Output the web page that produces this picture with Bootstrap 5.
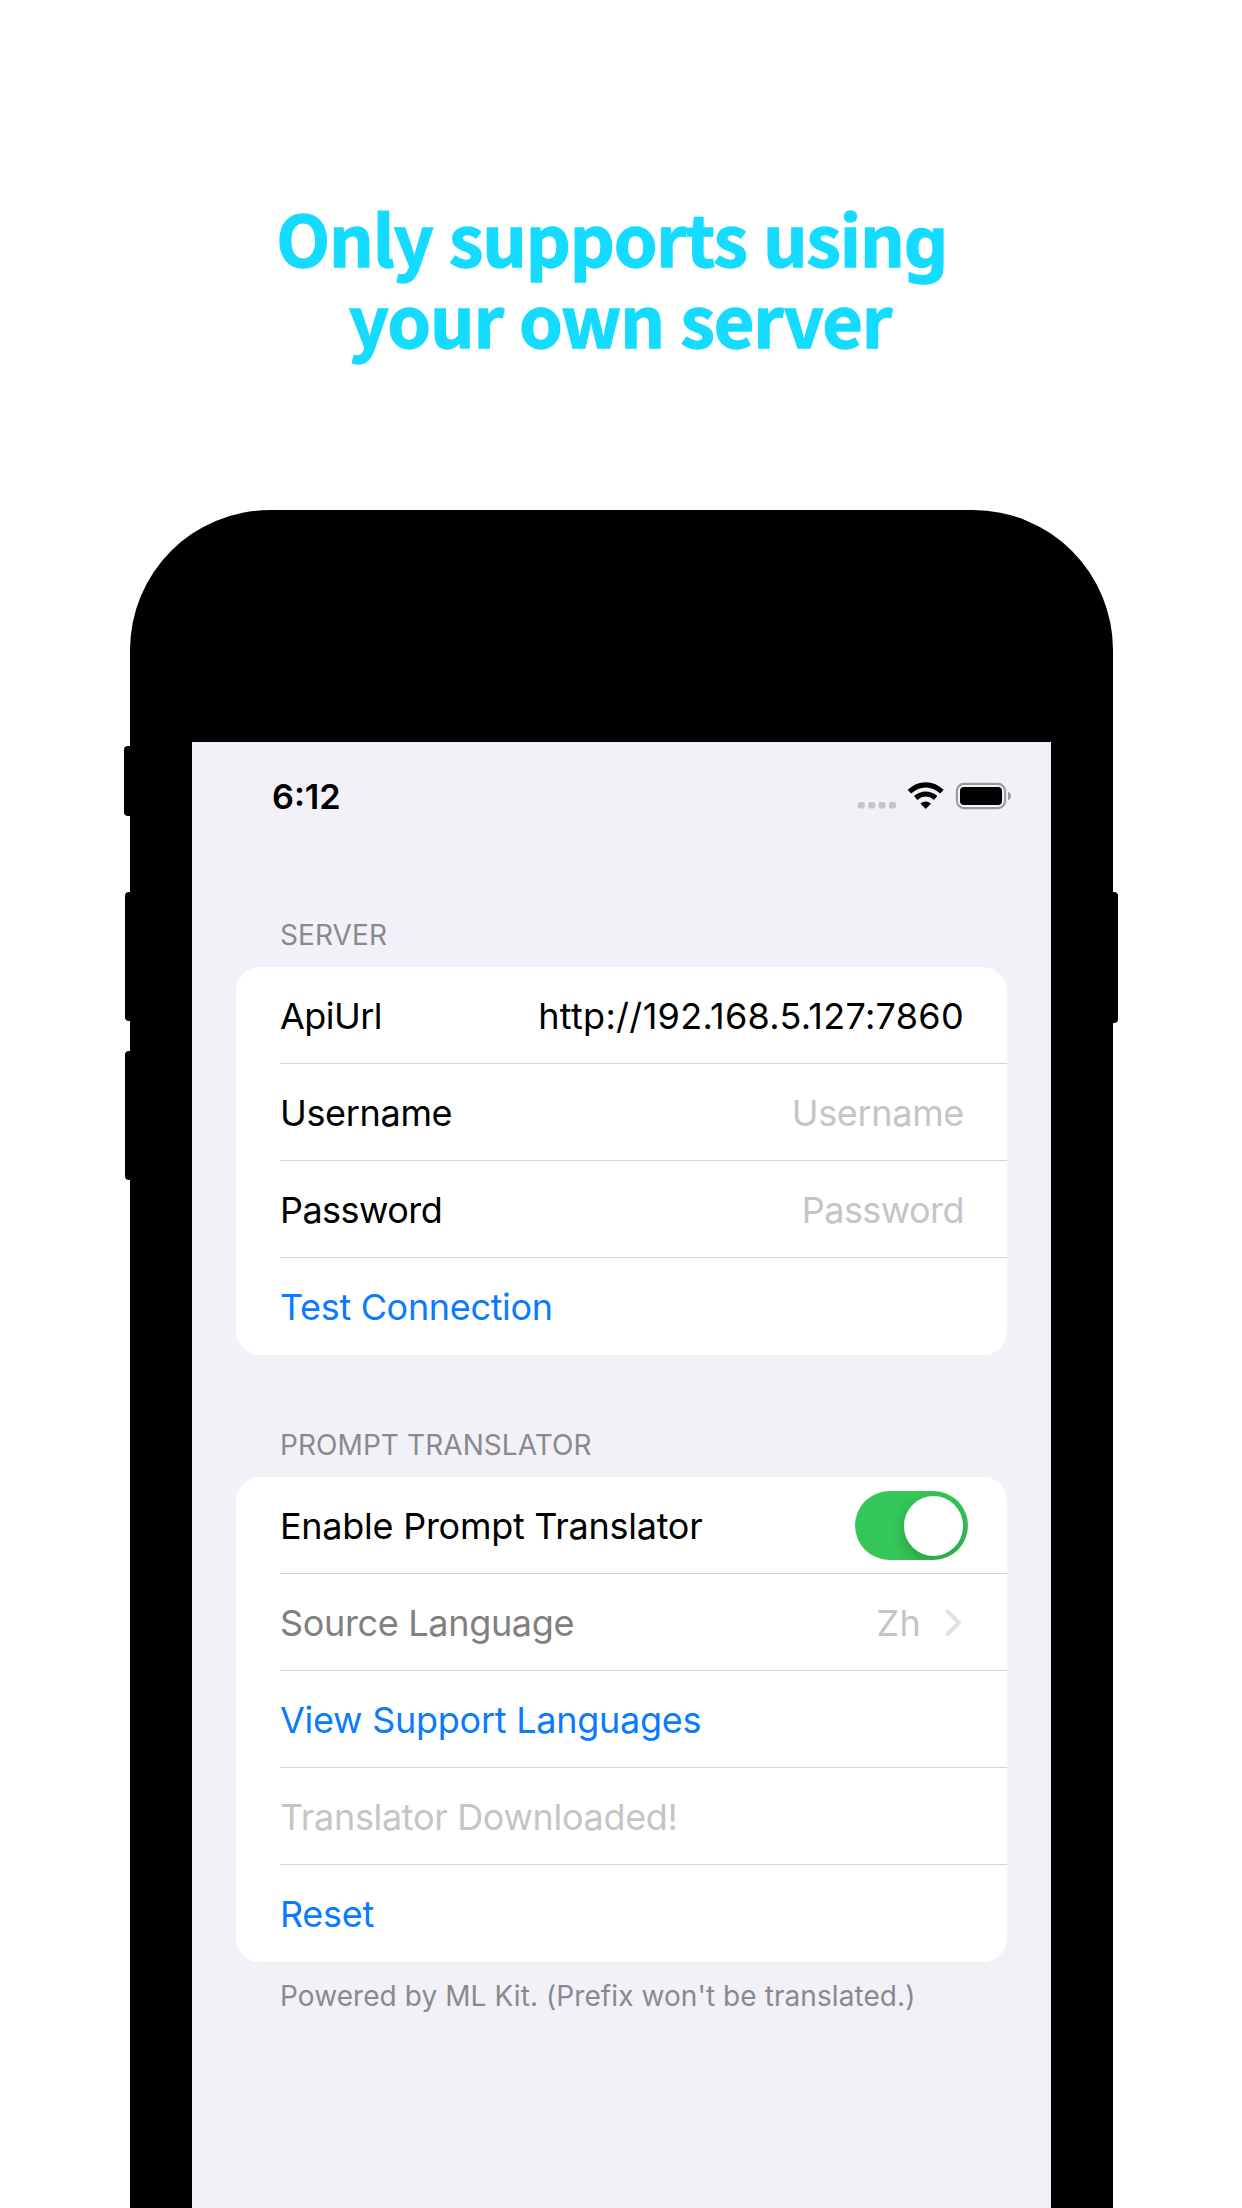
<!DOCTYPE html>
<html lang="en">
<head>
<meta charset="utf-8">
<meta name="viewport" content="width=device-width, initial-scale=1">
<title>Only supports using your own server</title>
<link href="https://cdn.jsdelivr.net/npm/bootstrap@5.3.0/dist/css/bootstrap.min.css" rel="stylesheet">
<style>
  body { font-family: Inter, "Liberation Sans", sans-serif; background: #fff; }
  .promo { height: 2208px; }
  .headline { height: 509.7px; padding-top: 196px; }
  .headline h1 { font-family: "Noto Sans CJK SC", "Noto Sans", sans-serif; font-size: 70px; font-weight: 700; line-height: 81px; color: #14dbff; letter-spacing: -1.15px; word-spacing: 1.5px; -webkit-text-stroke: 1.3px #14dbff; }
  .headline .line-a { margin-left: -19px; }
  .headline .line-b { margin-left: -2px; }
  .headline .gee { font-family: "Noto Sans", sans-serif; line-height: 0; }

  .phone { width: 982.3px; margin-left: 130.4px; padding: 232px 61.6px 0 61.6px; background: #000; border-radius: 140px 140px 0 0; }
  .side-key { position: absolute; background: #000; }
  .key-mute { left: -6.4px; top: 236.3px; width: 12px; height: 69.7px; border-radius: 4px; }
  .key-up { left: -5.2px; top: 382.3px; width: 12px; height: 129px; border-radius: 4px; }
  .key-down { left: -5.2px; top: 541.3px; width: 12px; height: 128.7px; border-radius: 4px; }
  .key-power { right: -5.3px; top: 382.5px; width: 12px; height: 130.5px; border-radius: 4px; }

  .screen { background: #f2f1f7; padding: 0 44.1px 0 44px; }
  .status { height: 108px; padding: 0 0 0 36px; }
  .status svg { margin-right: -3.5px; }
  .clock { font-size: 34.3px; font-weight: 600; letter-spacing: 0; color: #000; line-height: 40px; padding-top: 2px; }

  .caption { font-size: 28px; line-height: 34px; color: #8a8a8e; padding-left: 44px; letter-spacing: .08px; }
  .cap-server { height: 117px; padding-top: 68px; }
  .cap-prompt { height: 122px; padding-top: 73px; }
  .cap-foot { padding-top: 17px; }

  .cell-group { --bs-list-group-border-width: 0; border-radius: 24px; background: #fff; overflow: hidden; }
  .cell { height: 97px; padding: 2px 43px 0 0; margin-left: 44px; font-size: 36px; line-height: 44px; color: #000; background: transparent; position: relative; letter-spacing: -.33px; white-space: nowrap; }
  .cell + .cell { box-shadow: 0 -1px 0 #d6d6d8; }
  .cell.action { color: #0a7aff; }
  .ghost { color: #c5c5c7; }
  .dim { color: #808080; }
  .tight { letter-spacing: -.55px; }
  .loose { letter-spacing: -.26px; }
  .wide { letter-spacing: .3px; }
  .toggle { width: 113px; height: 69px; border-radius: 35px; background: #35c759; padding: 5px; margin: -1px -4px 0 0; overflow: hidden; }
  .knob { width: 59.5px; height: 59.5px; border-radius: 50%; background: #fff; box-shadow: 0 6px 16px rgba(0,0,0,.22); }
  .chevron { margin: 0 3px 0 24px; }
</style>
<script src="https://cdn.jsdelivr.net/npm/bootstrap@5.3.0/dist/js/bootstrap.bundle.min.js"></script>
</head>
<body>
<main class="promo d-flex flex-column overflow-hidden">
  <header class="headline text-center">
    <h1 class="m-0"><span class="line-a">Only supports usin<span class="gee">g</span></span><br><span class="line-b">your own server</span></h1>
  </header>

  <section class="phone position-relative d-flex flex-column flex-grow-1">
    <span class="side-key key-mute"></span>
    <span class="side-key key-up"></span>
    <span class="side-key key-down"></span>
    <span class="side-key key-power"></span>

    <div class="screen flex-grow-1">
      <div class="status d-flex align-items-center justify-content-between">
        <span class="clock">6:12</span>
        <svg width="154" height="28" viewBox="0 0 154 28" aria-hidden="true">
          <g fill="#c5c4c9">
            <rect x="0.8" y="20" width="7" height="6.6" rx="2"/><rect x="11.2" y="20" width="7" height="6.6" rx="2"/>
            <rect x="21.6" y="20" width="7" height="6.6" rx="2"/><rect x="32" y="20" width="7" height="6.6" rx="2"/>
          </g>
          <g fill="none" stroke="#000" stroke-width="5.2">
            <path d="M52.4 9.6 Q60 2.8 68.7 2.8 T85 9.6"/>
            <path d="M58.7 16 Q63.3 12 68.7 12 T78.7 16"/>
          </g>
          <path d="M63.4 21.6 Q68.7 17.3 74 21.6 L69.5 26.3 Q68.7 27 67.9 26.3 Z"/>
          <rect x="99.9" y="1.9" width="48.2" height="24.2" rx="7" fill="none" stroke="#9b9a9f" stroke-width="2.1"/>
          <rect x="103" y="5" width="42" height="18" rx="4"/>
          <path d="M151 9.8 Q154 11 154 14 T151 18.2 Z" fill="#9b9a9f"/>
        </svg>
      </div>

      <div class="caption cap-server">SERVER</div>
      <div class="cell-group list-group">
        <div class="cell d-flex align-items-center justify-content-between"><span class="tight">ApiUrl</span><span class="wide">http://192.168.5.127:7860</span></div>
        <div class="cell d-flex align-items-center justify-content-between"><span>Username</span><span class="ghost">Username</span></div>
        <div class="cell d-flex align-items-center justify-content-between"><span class="tight">Password</span><span class="ghost tight">Password</span></div>
        <div class="cell action d-flex align-items-center"><span>Test Connection</span></div>
      </div>

      <div class="caption cap-prompt">PROMPT TRANSLATOR</div>
      <div class="cell-group list-group">
        <div class="cell d-flex align-items-center justify-content-between"><span class="loose">Enable Prompt Translator</span>
          <div class="toggle d-flex justify-content-end"><div class="knob"></div></div>
        </div>
        <div class="cell d-flex align-items-center"><span class="dim me-auto">Source Language</span><span class="ghost wide">Zh</span>
          <svg class="chevron" width="16" height="28" viewBox="1.5 0 16 28" fill="none" stroke="#e1e1e4" stroke-width="4" stroke-linecap="round" stroke-linejoin="round" aria-hidden="true"><path d="M4 2.5 L15.5 13.7 L4 25"/></svg>
        </div>
        <div class="cell action d-flex align-items-center"><span class="loose">View Support Languages</span></div>
        <div class="cell ghost d-flex align-items-center"><span>Translator Downloaded!</span></div>
        <div class="cell action d-flex align-items-center"><span class="loose">Reset</span></div>
      </div>
      <div class="caption cap-foot">Powered by ML Kit. (Prefix won't be translated.)</div>
    </div>
  </section>
</main>
</body>
</html>
